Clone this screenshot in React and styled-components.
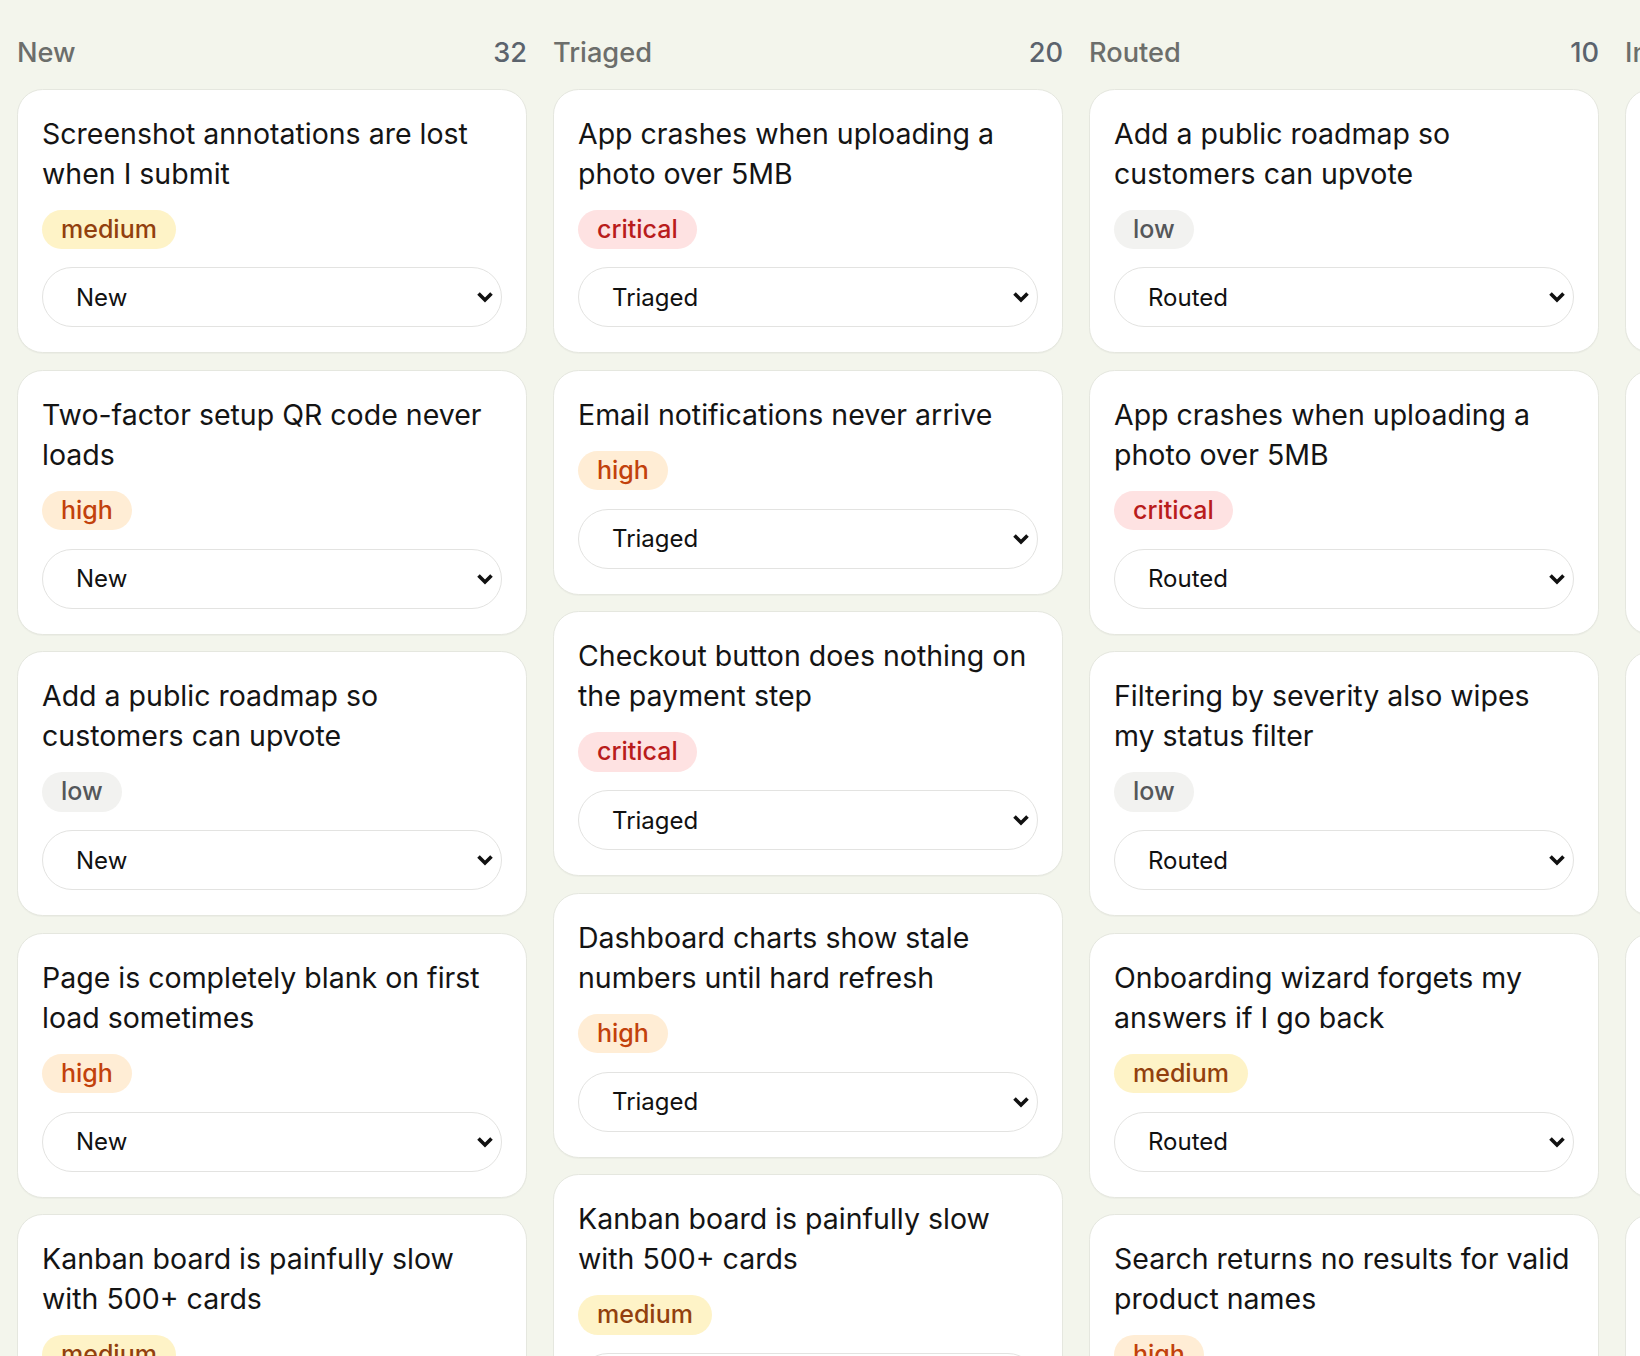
import React from "react"
import styled, { createGlobalStyle } from "styled-components"

const columns = [
  {
    title: "New",
    count: 32,
    cards: [
      { title: "Screenshot annotations are lost when I submit", severity: "medium" },
      { title: "Two-factor setup QR code never loads", severity: "high" },
      { title: "Add a public roadmap so customers can upvote", severity: "low" },
      { title: "Page is completely blank on first load sometimes", severity: "high" },
      { title: "Kanban board is painfully slow with 500+ cards", severity: "medium" },
    ],
  },
  {
    title: "Triaged",
    count: 20,
    cards: [
      { title: "App crashes when uploading a photo over 5MB", severity: "critical" },
      { title: "Email notifications never arrive", severity: "high" },
      { title: "Checkout button does nothing on the payment step", severity: "critical" },
      { title: "Dashboard charts show stale numbers until hard refresh", severity: "high" },
      { title: "Kanban board is painfully slow with 500+ cards", severity: "medium" },
    ],
  },
  {
    title: "Routed",
    count: 10,
    cards: [
      { title: "Add a public roadmap so customers can upvote", severity: "low" },
      { title: "App crashes when uploading a photo over 5MB", severity: "critical" },
      { title: "Filtering by severity also wipes my status filter", severity: "low" },
      { title: "Onboarding wizard forgets my answers if I go back", severity: "medium" },
      { title: "Search returns no results for valid product names", severity: "high" },
    ],
  },
  {
    title: "In progress",
    count: 7,
    cards: [
      { title: "Password reset link expires too quickly", severity: "high" },
      { title: "Export to CSV drops the last row of data", severity: "medium" },
      { title: "Dark mode toggle resets after every reload", severity: "low" },
      { title: "Uploads stall at 99% on slow connections", severity: "critical" },
      { title: "Mentions in comments do not notify anyone", severity: "medium" },
    ],
  },
]

const statuses = ["New", "Triaged", "Routed", "In progress", "Resolved"]

const severityColors = {
  low: { bg: "#f2f2f0", fg: "#55575a" },
  medium: { bg: "#fef3c7", fg: "#92400e" },
  high: { bg: "#ffedd5", fg: "#c2410c" },
  critical: { bg: "#fee2e2", fg: "#b91c1c" },
}

const Chevron = () => (
  <ChevronIcon viewBox="0 0 18 12" aria-hidden="true">
    <path d="M2.5 2.5 L9 9 L15.5 2.5" />
  </ChevronIcon>
)

const App = () => {
  return (
    <>
      <GlobalStyle />
      <Board>
        {columns.map(col => (
          <Column key={col.title}>
            <ColumnHeader>
              <ColumnTitle>{col.title}</ColumnTitle>
              <Count>{col.count}</Count>
            </ColumnHeader>
            <CardList>
              {col.cards.map((card, i) => (
                <Card key={i}>
                  <Title>{card.title}</Title>
                  <Badge level={card.severity}>{card.severity}</Badge>
                  <SelectWrap>
                    <StatusSelect defaultValue={col.title}>
                      {statuses.map(s => (
                        <option key={s} value={s}>
                          {s}
                        </option>
                      ))}
                    </StatusSelect>
                    <Chevron />
                  </SelectWrap>
                </Card>
              ))}
            </CardList>
          </Column>
        ))}
      </Board>
    </>
  )
}

export default App

const GlobalStyle = createGlobalStyle`
  html, body {
    margin: 0;
    background: #f3f5ec;
    overflow-x: hidden;
  }

  body {
    font-family: Inter, "Noto Sans", sans-serif;
    color: #111;
  }
`

const Board = styled.main`
  display: flex;
  gap: 26px;
  padding: 33px 17px 40px;
  align-items: flex-start;
`

const Column = styled.section`
  flex: 0 0 510px;
  display: flex;
  flex-direction: column;
`

const ColumnHeader = styled.header`
  display: flex;
  justify-content: space-between;
  align-items: baseline;
  font-size: 27.2px;
  line-height: 40px;
  margin-bottom: 15.5px;
`

const ColumnTitle = styled.h2`
  margin: 0;
  font-size: inherit;
  font-weight: 500;
  color: #6c6e6b;
`

const Count = styled.span`
  font-weight: 500;
  color: #5b636d;
`

const CardList = styled.div`
  display: flex;
  flex-direction: column;
  gap: 16.5px;
`

const Card = styled.article`
  background: #fff;
  border: 1.6px solid #e5e7df;
  border-radius: 25.6px;
  padding: 24px 24px 25px;
  box-shadow: 0 1px 1px rgba(0, 0, 0, 0.03);
  display: flex;
  flex-direction: column;
  align-items: flex-start;
`

const Title = styled.h3`
  margin: 0;
  font-size: 28.5px;
  line-height: 40px;
  font-weight: 400;
  color: #141414;
`

const Badge = styled.span`
  margin-top: 16px;
  display: inline-block;
  padding: 7px 19px;
  line-height: 25.3px;
  font-size: 25px;
  font-weight: 500;
  border-radius: 999px;
  background: ${p => severityColors[p.level].bg};
  color: ${p => severityColors[p.level].fg};
`

const SelectWrap = styled.div`
  position: relative;
  width: 100%;
  margin-top: 18.4px;
`

const StatusSelect = styled.select`
  appearance: none;
  -webkit-appearance: none;
  display: block;
  width: 100%;
  height: 60.3px;
  padding: 0 40px 0 33px;
  border: 1.6px solid #e3e3e1;
  border-radius: 999px;
  background: #fff;
  color: #111;
  font-family: Inter, "Noto Sans", sans-serif;
  font-size: 24px;
`

const ChevronIcon = styled.svg`
  position: absolute;
  right: 8px;
  top: 50%;
  width: 18px;
  height: 12px;
  margin-top: -6px;
  pointer-events: none;
  fill: none;
  stroke: #111;
  stroke-width: 3.6;
  stroke-linecap: butt;
  stroke-linejoin: miter;
`
